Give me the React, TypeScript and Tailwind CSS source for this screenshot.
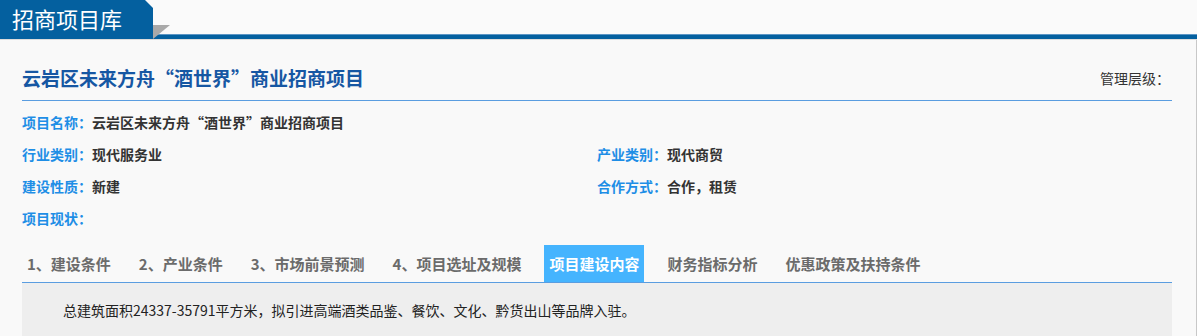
import React from 'react';

const font = { fontFamily: '"Noto Sans CJK SC", "Noto Sans", sans-serif' };

const tabs = [
  '1、建设条件',
  '2、产业条件',
  '3、市场前景预测',
  '4、项目选址及规模',
  '项目建设内容',
  '财务指标分析',
  '优惠政策及扶持条件',
];

function Field({ label, value }: { label: string; value?: string }) {
  return (
    <div className="flex h-[32px] items-center text-[14px] font-bold">
      <span className="text-[#1e8ee6]">{label}</span>
      <span className="text-[#333]">{value}</span>
    </div>
  );
}

export default function App() {
  return (
    <div
      className="w-[1197px] h-[336px] overflow-hidden bg-[#f9f9f9]"
      style={font}
    >
      {/* header bar */}
      <div className="relative flex h-[40px] items-end bg-[#fafafa] border-b border-[#dcdcdc]">
        <div className="flex h-[40px] w-[153px] items-center bg-[#04609f] pl-[12px] pb-[2px] text-[22px] text-white [clip-path:polygon(0_0,144px_0,153px_9px,153px_100%,0_100%)]">
          招商项目库
        </div>
        <div className="h-[5px] flex-1 bg-[#04609f] border-t border-[#5b95c4]" />
        <div className="absolute left-[153px] top-[25px] h-[14px] w-[17px] bg-[#a9a9a9] [clip-path:polygon(0_0,100%_0,0_100%)]" />
      </div>

      {/* body */}
      <div className="h-full border-r border-[#c8c8c8] pl-[22px] pr-[24px]">
        <div className="flex items-center justify-between border-b border-[#5a9de0] pt-[25px] pb-[9px]">
          <h1 className="text-[19px] leading-[26px] font-bold text-[#1657a3]">
            云岩区未来方舟“酒世界”商业招商项目
          </h1>
          <span className="pr-[2px] text-[14px] text-[#333]">管理层级：</span>
        </div>

        <div className="mt-[5px]">
          <Field label="项目名称：" value="云岩区未来方舟“酒世界”商业招商项目" />
          <div className="grid grid-cols-[575px_1fr]">
            <Field label="行业类别：" value="现代服务业" />
            <Field label="产业类别：" value="现代商贸" />
            <Field label="建设性质：" value="新建" />
            <Field label="合作方式：" value="合作，租赁" />
          </div>
          <Field label="项目现状：" />
        </div>

        <div className="mt-[11px] flex gap-[18px] border-b border-[#5a9de0]">
          {tabs.map((t, i) => (
            <div
              key={t}
              className={
                i === 4
                  ? 'h-[37px] px-[5px] text-[15px] leading-[37px] font-bold bg-[#45b4fe] text-white'
                  : 'h-[37px] px-[5px] text-[15px] leading-[37px] font-bold text-[#6b6b6b]'
              }
            >
              {t}
            </div>
          ))}
        </div>

        <div className="h-[60px] bg-[#eeeeee] pl-[41px] pt-[17px] text-[14px] leading-[20px] text-[#222]">
          总建筑面积24337-35791平方米，拟引进高端酒类品鉴、餐饮、文化、黔货出山等品牌入驻。
        </div>
      </div>
    </div>
  );
}
